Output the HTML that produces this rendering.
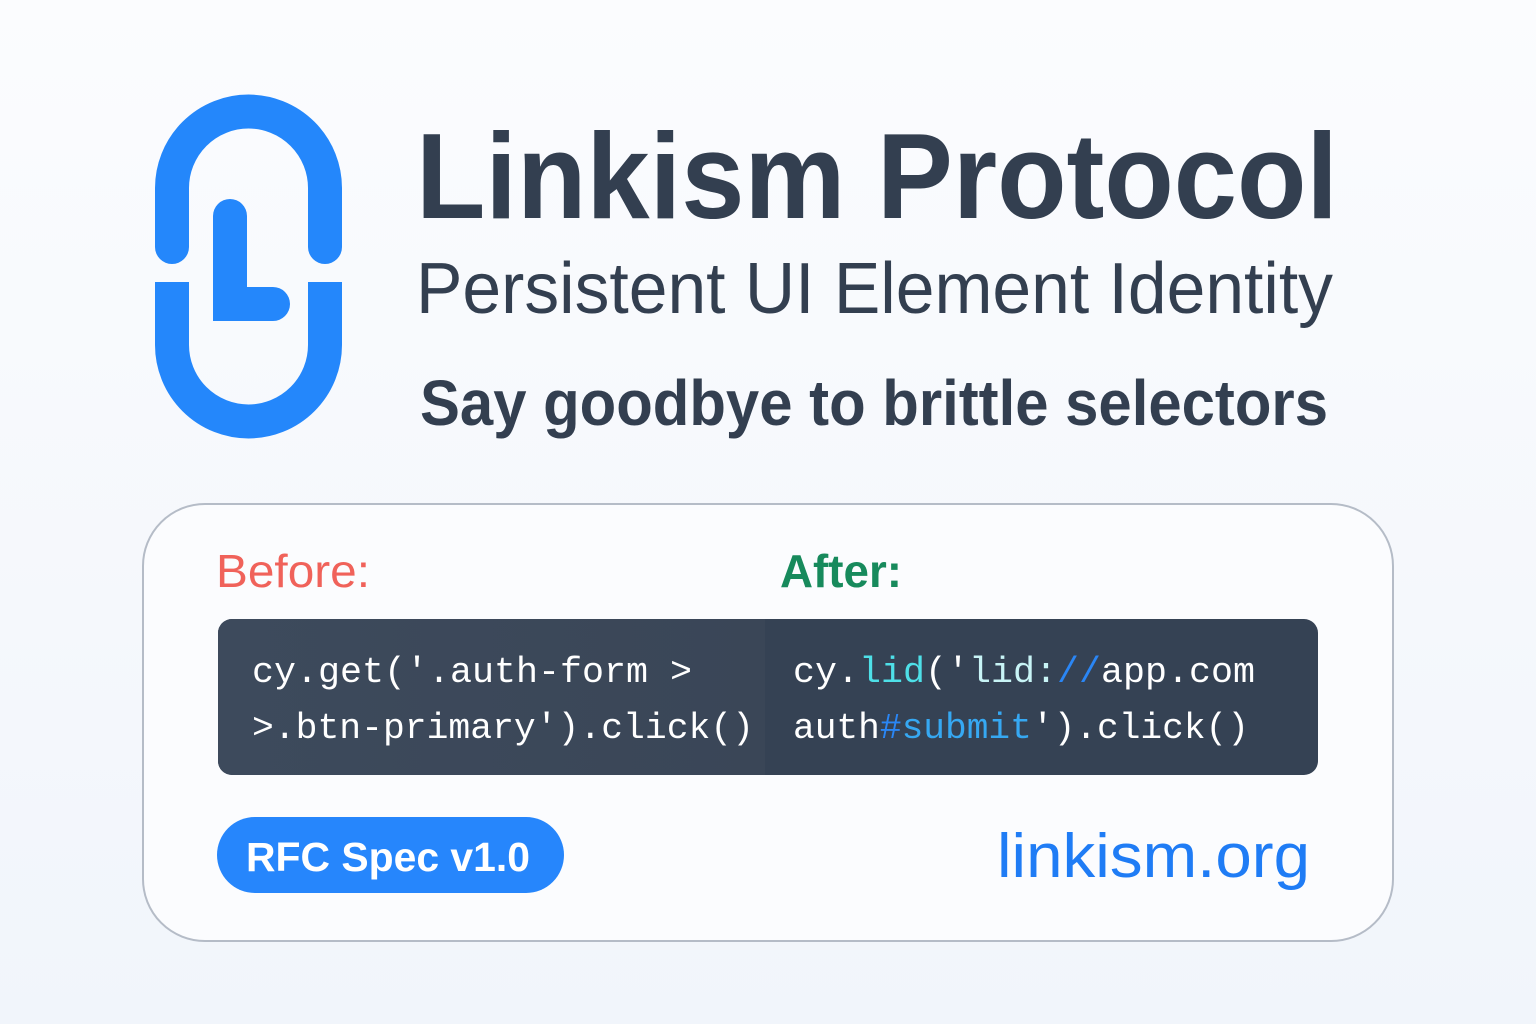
<!DOCTYPE html>
<html><head><meta charset="utf-8"><style>
html,body{margin:0;padding:0;width:1536px;height:1024px;overflow:hidden}
svg{display:block}
</style></head><body>
<svg width="1536" height="1024" viewBox="0 0 1536 1024" xmlns="http://www.w3.org/2000/svg">
<defs>
<linearGradient id="bg" x1="0" y1="0" x2="0" y2="1">
<stop offset="0" stop-color="#fbfcfe"/><stop offset="1" stop-color="#f1f5fb"/>
</linearGradient>
<linearGradient id="cl" x1="0" y1="0" x2="1" y2="0">
<stop offset="0" stop-color="#3d4a5c"/><stop offset="1" stop-color="#3a4657"/>
</linearGradient>
</defs>
<rect width="1536" height="1024" fill="url(#bg)"/>
<!-- logo -->
<g fill="none" stroke="#2487fb" stroke-width="34" stroke-linecap="round">
<path d="M172 247 V188 A76.5 76.5 0 0 1 325 188 V247"/>
<path d="M230 216 V304 H273"/>
</g>
<path d="M172 282 V345 A76.5 76.5 0 0 0 325 345 V282" fill="none" stroke="#2487fb" stroke-width="34" stroke-linecap="butt" stroke-linejoin="round"/>
<g font-family="Liberation Sans, sans-serif" fill="#333f50">
<text x="416" y="218" font-size="122" font-weight="bold" textLength="922" lengthAdjust="spacingAndGlyphs">Linkism Protocol</text>
<text x="416" y="313" font-size="72" textLength="917" lengthAdjust="spacingAndGlyphs">Persistent UI Element Identity</text>
<text x="420" y="425" font-size="64" font-weight="bold" textLength="908" lengthAdjust="spacingAndGlyphs">Say goodbye to brittle selectors</text>
</g>
<rect x="143" y="504" width="1250" height="437" rx="62" fill="#fbfcfe" stroke="#b5bcc7" stroke-width="2"/>
<g font-family="Liberation Sans, sans-serif" font-size="46">
<text x="216" y="587" fill="#f0625a" textLength="154" lengthAdjust="spacingAndGlyphs">Before:</text>
<text x="780" y="587" fill="#178a5c" font-weight="bold" textLength="122" lengthAdjust="spacingAndGlyphs">After:</text>
</g>
<rect x="218" y="619" width="1100" height="156" rx="14" fill="#354254"/>
<path d="M232 619 H765 V775 H232 A14 14 0 0 1 218 761 V633 A14 14 0 0 1 232 619Z" fill="url(#cl)"/>
<g font-family="Liberation Mono, monospace" font-size="36" fill="#ffffff">
<text x="252" y="682" textLength="440" lengthAdjust="spacingAndGlyphs">cy.get('.auth-form &gt;</text>
<text x="252" y="738" textLength="502" lengthAdjust="spacingAndGlyphs">&gt;.btn-primary').click()</text>
<text x="793" y="682" textLength="462" lengthAdjust="spacingAndGlyphs">cy.<tspan fill="#4ee0e8">lid</tspan>('<tspan fill="#c8f4f6">lid:</tspan><tspan fill="#2a86f5">//</tspan>app.com</text>
<text x="793" y="738" textLength="456" lengthAdjust="spacingAndGlyphs">auth<tspan fill="#2a86f5">#</tspan><tspan fill="#36a8f2">submit</tspan>').click()</text>
</g>
<rect x="217" y="817" width="347" height="76" rx="38" fill="#2686fc"/>
<g font-family="Liberation Sans, sans-serif">
<text x="246" y="871" font-size="41" font-weight="bold" fill="#ffffff" textLength="284" lengthAdjust="spacingAndGlyphs">RFC Spec v1.0</text>
<text x="997" y="877" font-size="62" fill="#1f7cf5" textLength="313" lengthAdjust="spacingAndGlyphs">linkism.org</text>
</g>
</svg>
</body></html>
